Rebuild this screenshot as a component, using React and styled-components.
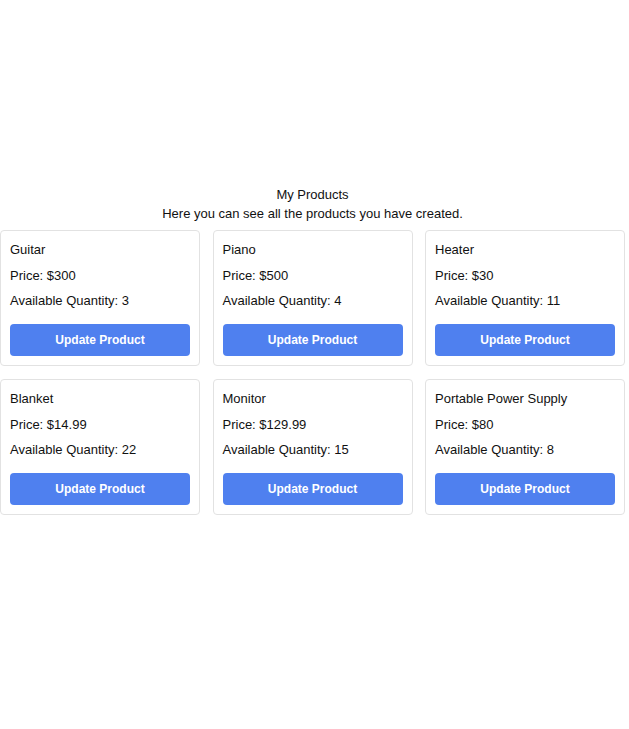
import React from "react";
import styled, { createGlobalStyle } from "styled-components";

const GlobalStyle = createGlobalStyle`
  html, body { margin: 0; padding: 0; background: #ffffff; }
  body { font-family: "Liberation Sans", Arial, sans-serif; font-size: 13px; color: #111111; }
`;

const Page = styled.main`
  width: 625px;
  padding-top: 185px;
`;

const Header = styled.header`
  text-align: center;
  line-height: 19px;
  margin-bottom: 7px;
`;

const Title = styled.h1`
  margin: 0;
  font-size: 13px;
  font-weight: 400;
`;

const Subtitle = styled.p`
  margin: 0;
`;

const Grid = styled.section`
  display: grid;
  grid-template-columns: repeat(3, 200px);
  column-gap: 12.5px;
  row-gap: 13px;
`;

const Card = styled.article`
  box-sizing: border-box;
  border: 1px solid #e2e2e2;
  border-radius: 4px;
  padding: 9px;
  display: flex;
  flex-direction: column;
  gap: 5.5px;
`;

const Line = styled.p`
  margin: 0;
  line-height: 20px;
`;

const Button = styled.button`
  margin-top: 7.5px;
  height: 32px;
  border: none;
  border-radius: 4px;
  background: #4f80ef;
  color: #ffffff;
  font-family: "Liberation Sans", Arial, sans-serif;
  font-size: 12px;
  font-weight: 700;
  cursor: pointer;
`;

const products = [
  { name: "Guitar", price: "300", qty: 3 },
  { name: "Piano", price: "500", qty: 4 },
  { name: "Heater", price: "30", qty: 11 },
  { name: "Blanket", price: "14.99", qty: 22 },
  { name: "Monitor", price: "129.99", qty: 15 },
  { name: "Portable Power Supply", price: "80", qty: 8 },
];

export default function App() {
  return (
    <>
      <GlobalStyle />
      <Page>
        <Header>
          <Title>My Products</Title>
          <Subtitle>Here you can see all the products you have created.</Subtitle>
        </Header>
        <Grid>
          {products.map((p) => (
            <Card key={p.name}>
              <Line>{p.name}</Line>
              <Line>Price: ${p.price}</Line>
              <Line>Available Quantity: {p.qty}</Line>
              <Button>Update Product</Button>
            </Card>
          ))}
        </Grid>
      </Page>
    </>
  );
}
